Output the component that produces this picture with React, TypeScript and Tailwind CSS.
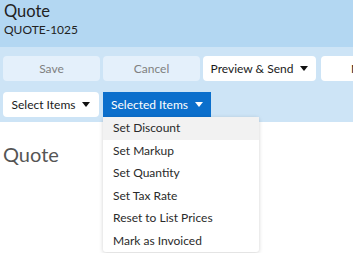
import React from "react";

const Caret = ({ color = "#111" }: { color?: string }) => (
  <svg width="8" height="5" viewBox="0 0 8 5" className="ml-[7px]">
    <path d="M0 0 L8 0 L4 5 Z" fill={color} />
  </svg>
);

export default function App() {
  const items = [
    "Set Discount",
    "Set Markup",
    "Set Quantity",
    "Set Tax Rate",
    "Reset to List Prices",
    "Mark as Invoiced",
  ];
  return (
    <div
      className="w-[353px] h-[253px] overflow-hidden bg-white relative"
      style={{ fontFamily: "Lato, 'Open Sans', sans-serif" }}
    >
      <div className="h-[47px] bg-[#b3d7f2] px-[4px] pt-[1px]">
        <div className="text-[16.5px] leading-[20px] text-[#222]">Quote</div>
        <div className="text-[12px] leading-[16px] mt-[1px] text-[#222]">QUOTE-1025</div>
      </div>
      <div className="bg-[#cde4f6] pt-[9px] pb-[5px] pl-[3px] flex flex-col gap-[11px]">
        <div className="flex h-[25px] whitespace-nowrap text-[12px]">
          <div className="w-[97px] shrink-0 rounded-[4px] bg-[#e4f0fb] flex items-center justify-center text-[#808080]">
            Save
          </div>
          <div className="ml-[3px] w-[97px] shrink-0 rounded-[4px] bg-[#e4f0fb] flex items-center justify-center text-[#808080]">
            Cancel
          </div>
          <div className="ml-[3px] w-[113px] shrink-0 rounded-[4px] bg-white flex items-center justify-center text-[#1a1a1a]">
            Preview &amp; Send
            <Caret />
          </div>
          <div className="ml-[5px] w-[80px] shrink-0 rounded-[4px] bg-white flex items-center pl-[30px] text-[#1a1a1a] overflow-hidden">
            More
          </div>
        </div>
        <div className="flex h-[25px] whitespace-nowrap text-[12px]">
          <div className="w-[96px] shrink-0 rounded-[4px] bg-white flex items-center justify-center text-[#1a1a1a]">
            Select Items
            <Caret />
          </div>
          <div className="relative ml-[4px] w-[108px] shrink-0 bg-[#0b6fcc] flex items-center justify-center text-white">
            Selected Items
            <Caret color="#fff" />
            <div className="absolute left-0 top-[25px] w-[156px] bg-white rounded-[3px] shadow-[0_1px_4px_rgba(0,0,0,0.18)] z-10 text-[#2a2a2a] text-[12px]">
              {items.map((t, i) => (
                <div
                  key={t}
                  className={
                    "h-[22.5px] flex items-center pl-[10px] " +
                    (i === 0 ? "bg-[#f2f2f2]" : "")
                  }
                >
                  {t}
                </div>
              ))}
            </div>
          </div>
        </div>
      </div>
      <div className="px-[3px] pt-[19px] text-[20px] leading-[26px] text-[#555]">Quote</div>
    </div>
  );
}
